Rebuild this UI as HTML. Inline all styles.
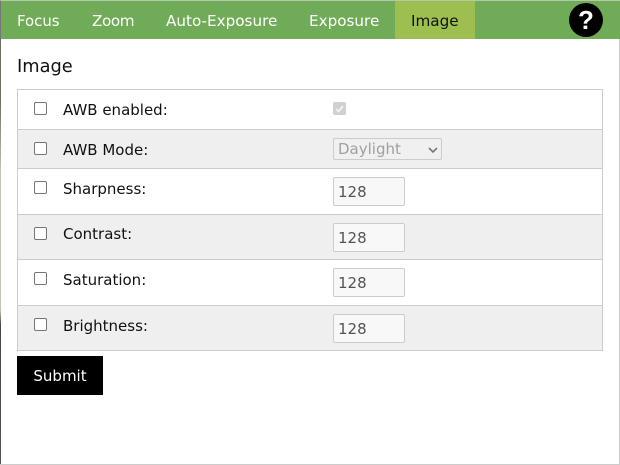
<!DOCTYPE html>
<html><head><meta charset="utf-8"><style>
html,body{margin:0;padding:0}
body{width:620px;height:465px;position:relative;overflow:hidden;background:#fff;font-family:"DejaVu Sans","Liberation Sans",sans-serif;color:#111}
div,span{position:absolute;box-sizing:border-box;white-space:nowrap}
.t{font-size:15.2px;line-height:20px;color:#fff}
.row{left:17px;width:586px;border:1px solid #ccc;border-bottom:0}
.g{background:#efefef}
.cb{left:34px;width:13px;height:13px;border:1px solid #767676;border-radius:2px;background:#fff}
.l{left:63px;font-size:15px;line-height:20px;color:#111}
.in{left:333px;width:72px;height:29px;background:#f8f8f8;border:1px solid #ccc;border-radius:2px;font-size:15px;line-height:29px;padding-left:4px;color:#545454}
</style></head><body>
<div style="left:0;top:0;width:1px;height:465px;background:linear-gradient(#6b6b5f 0,#6b6b5f 100px,#c4c4b4 170px,#c4c4b4 310px,#444 325px,#555 465px)"></div>
<div style="left:0;top:464px;width:620px;height:1px;background:#ccc"></div>
<div style="left:619px;top:0;width:1px;height:465px;background:#ccc"></div>
<div style="left:0;top:0;width:620px;height:39px;background:#70ab57;border-top:1px solid #b5c9a8;border-left:1px solid #777"></div>
<div style="left:395px;top:1px;width:80px;height:38px;background:#9dbf50"></div>
<div class="t" style="left:17px;top:11px;font-size:14.9px">Focus</div>
<div class="t" style="left:92px;top:11px;letter-spacing:-.4px">Zoom</div>
<div class="t" style="left:166px;top:11px">Auto-Exposure</div>
<div class="t" style="left:309px;top:11px">Exposure</div>
<div class="t" style="left:411px;top:11px;color:#111">Image</div>
<div style="left:569px;top:3px;width:34px;height:34px;border-radius:50%;background:#000;color:#fff;font:bold 26px/34px 'Liberation Sans',sans-serif;text-align:center">?</div>
<div style="left:17px;top:55px;font-size:17.8px;line-height:24px;color:#111">Image</div>

<div class="row" style="top:89px;height:41px"></div>
<div class="row g" style="top:129px;height:40px"></div>
<div class="row" style="top:168px;height:47px"></div>
<div class="row g" style="top:214px;height:46px"></div>
<div class="row" style="top:259px;height:47px"></div>
<div class="row g" style="top:305px;height:46px;border-bottom:1px solid #ccc"></div>

<div class="cb" style="top:102px"></div><div class="l" style="top:100px">AWB enabled:</div>
<div class="cb" style="top:142px"></div><div class="l" style="top:140px">AWB Mode:</div>
<div class="cb" style="top:181px"></div><div class="l" style="top:179px">Sharpness:</div>
<div class="cb" style="top:227px"></div><div class="l" style="top:224px">Contrast:</div>
<div class="cb" style="top:272px"></div><div class="l" style="top:270px">Saturation:</div>
<div class="cb" style="top:318px"></div><div class="l" style="top:316px">Brightness:</div>

<div style="left:333px;top:102px;width:13px;height:13px;background:#d0d0d0;border-radius:2px">
<svg width="13" height="13" style="display:block"><path d="M3 7l2.5 2.5L10 4" fill="none" stroke="#f2f2f2" stroke-width="1.8"/></svg></div>

<div style="left:333px;top:138px;width:109px;height:22px;background:#f0f0f0;border:1px solid #ccc;border-radius:2px;font-size:15px;line-height:21px;padding-left:4px;color:#a0a0a0">Daylight
<svg width="11" height="7" style="position:absolute;left:94px;top:8px"><path d="M1 1l4 4 4-4" fill="none" stroke="#777" stroke-width="1.6"/></svg></div>

<div class="in" style="top:177px">128</div>
<div class="in" style="top:223px">128</div>
<div class="in" style="top:268px">128</div>
<div class="in" style="top:314px">128</div>

<div style="left:17px;top:356px;width:86px;height:39px;background:#000;color:#fff;font-size:15px;line-height:40px;text-align:center">Submit</div>
</body></html>
